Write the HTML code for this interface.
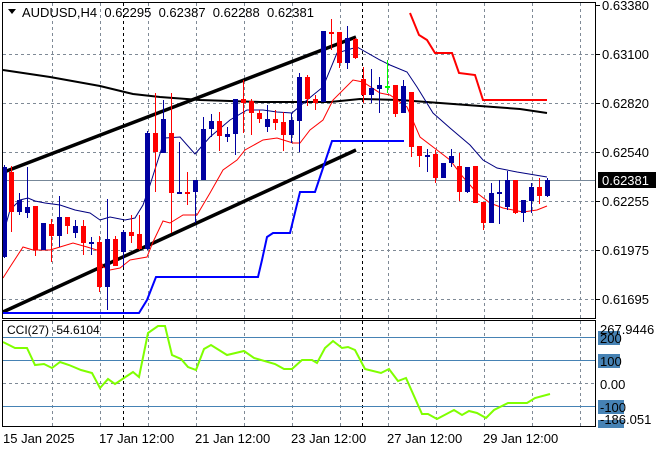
<!DOCTYPE html>
<html><head><meta charset="utf-8">
<style>
html,body{margin:0;padding:0;background:#fff;}
body{width:660px;height:450px;overflow:hidden;position:relative;font-family:"Liberation Sans","DejaVu Sans",sans-serif;}
svg{position:absolute;left:0;top:0;}
svg text{font-family:"Liberation Sans","DejaVu Sans",sans-serif;font-size:12px;}
svg text.sc{font-size:13px;}
</style></head><body>
<svg id="s" width="660" height="450" viewBox="0 0 660 450" xmlns="http://www.w3.org/2000/svg">
<g stroke="#7f8a96" stroke-width="1" stroke-dasharray="3,3" fill="none" id="grid">
<line x1="3" y1="54.5" x2="595" y2="54.5"/><line x1="3" y1="103.5" x2="595" y2="103.5"/>
<line x1="3" y1="152.5" x2="595" y2="152.5"/><line x1="3" y1="201.5" x2="595" y2="201.5"/>
<line x1="3" y1="250.5" x2="595" y2="250.5"/><line x1="3" y1="299.5" x2="595" y2="299.5"/>
<line x1="3" y1="383.5" x2="595" y2="383.5"/>
</g>
<g stroke="#000" stroke-width="1" stroke-dasharray="3,3">
<line x1="123.5" y1="3" x2="123.5" y2="426"/><line x1="362.5" y1="3" x2="362.5" y2="426"/>
</g>
<line x1="3" y1="180.5" x2="595" y2="180.5" stroke="#778899"/>
<g stroke="#4682b4" stroke-width="1">
<line x1="3" y1="337.5" x2="595" y2="337.5"/><line x1="3" y1="360.5" x2="595" y2="360.5"/><line x1="3" y1="406.5" x2="595" y2="406.5"/>
</g>
<polyline fill="none" stroke="#000" stroke-width="2" points="3,70 50,77 100,86 133,94 160,97 200,100 230,101 260,102 330,102 360,99 400,100 440,103 480,106 520,109 547,113"/>
<line x1="4" y1="172" x2="356" y2="37" stroke="#000" stroke-width="3.5"/>
<line x1="3" y1="312" x2="356" y2="150" stroke="#000" stroke-width="3.5"/>
<polyline fill="none" stroke="#f00" stroke-width="2" points="410,13 419,35 427,40 435,53 452,53 459,73 475,75 483,100 547,100"/>
<polyline fill="none" stroke="#0000ff" stroke-width="2" points="3,313 139,313 147,300 156,277 258,277 262,260 267,237 273,233 290,233 300,192 315,192 332,141 404,141"/>
<polyline fill="none" stroke="#000080" stroke-width="1" points="3,235 10,210 20,200 28,198 35,201 45,203 60,205 75,210 90,213 100,220 110,217 125,220 135,218 143,205 150,185 165,138 180,137 195,154 210,137 230,120 247,110 263,110 277,112 292,113 307,100 323,87 337,53 357,47 380,60 390,65 407,72 417,87 433,113 450,128 470,145 483,160 497,168 517,172 547,177"/>
<polyline fill="none" stroke="#f00" stroke-width="1" points="3,278 10,267 23,247 33,250 50,250 60,247 73,243 87,247 97,250 103,267 110,270 120,268 130,260 147,257 153,242 163,221 170,223 183,215 197,215 210,193 223,170 237,160 245,150 263,140 277,138 293,143 300,143 310,130 323,120 333,100 353,80 363,82 380,93 390,95 407,107 420,137 437,150 450,160 463,177 477,193 490,203 503,208 523,212 537,210 547,206"/>
<g id="candles"></g>
<polyline fill="none" stroke="#7fff00" stroke-width="2" points="3,342 15,348 27,348 35,365 44,364 52,368 60,362 69,365 81,370 92,373 100,388 108,379 115,384 133,372 139,377 148,333 158,326 165,326 172,355 181,359 188,367 196,370 204,349 211,345 227,355 244,351 254,358 275,364 284,369 292,369 302,360 312,360 317,363 325,348 333,341 342,348 348,347 355,350 365,369 381,373 389,369 398,381 406,378 422,414 428,414 437,419 454,410 462,415 469,411 477,413 486,418 494,410 508,403 527,403 535,398 550,394"/>
<rect x="2.5" y="2.5" width="593" height="316" fill="none" stroke="#000"/>
<rect x="2.5" y="320.5" width="593" height="106" fill="none" stroke="#000"/>
<g stroke="#000">
<line x1="596" y1="5.5" x2="600" y2="5.5"/><line x1="596" y1="54.5" x2="600" y2="54.5"/><line x1="596" y1="103.5" x2="600" y2="103.5"/><line x1="596" y1="152.5" x2="600" y2="152.5"/><line x1="596" y1="201.5" x2="600" y2="201.5"/><line x1="596" y1="250.5" x2="600" y2="250.5"/><line x1="596" y1="299.5" x2="600" y2="299.5"/>
</g>
<g fill="#000">
<text class="sc" x="602" y="10">0.63380</text><text class="sc" x="602" y="59">0.63100</text><text class="sc" x="602" y="108">0.62820</text><text class="sc" x="602" y="157">0.62540</text><text class="sc" x="602" y="206">0.62255</text><text class="sc" x="602" y="255">0.61975</text><text class="sc" x="602" y="304">0.61695</text>
</g>
<rect x="598" y="172" width="58" height="16" fill="#000"/>
<text class="sc" x="602" y="185" fill="#fff">0.62381</text>
<rect x="598" y="331" width="22" height="14" fill="#4682b4"/>
<rect x="598" y="354" width="22" height="14" fill="#4682b4"/>
<rect x="598" y="400" width="26" height="14" fill="#4682b4"/>
<rect x="598" y="420" width="26" height="8" fill="#4682b4"/>
<g fill="#000">
<text class="sc" x="600" y="334">267.9446</text>
<text class="sc" x="600" y="343">200</text><text class="sc" x="600" y="366">100</text><text class="sc" x="600" y="389">0.00</text><text class="sc" x="600" y="412">-100</text><text class="sc" x="600" y="424">-186.051</text>
<text class="sc" x="3" y="443">15 Jan 2025</text><text class="sc" x="99" y="443">17 Jan 12:00</text><text class="sc" x="195" y="443">21 Jan 12:00</text><text class="sc" x="291" y="443">23 Jan 12:00</text><text class="sc" x="387" y="443">27 Jan 12:00</text><text class="sc" x="483" y="443">29 Jan 12:00</text>
<text x="7" y="334">CCI(27) -54.6104</text>
<text class="sc" x="22" y="17" xml:space="preserve">AUDUSD,H4  0.62295  0.62387  0.62288  0.62381</text>
</g>
<path d="M8,9 L16,9 L12,14 Z" fill="#000"/>
</svg>
<script>
var vg=[52,100,148,196,244,292,340,388,436,484,532,580];
var g=document.getElementById('grid'),ns='http://www.w3.org/2000/svg';
vg.forEach(function(x){var l=document.createElementNS(ns,'line');l.setAttribute('x1',x+.5);l.setAttribute('x2',x+.5);l.setAttribute('y1',3);l.setAttribute('y2',426);g.appendChild(l);});
var C=[[167,257,165,258,'b'],[172,212,166,232,'r'],[200,212,193,215,'b'],[207,213,167,218,'b'],[206,250,206,256,'r'],[223,250,223,250,'b'],[224,236,219,262,'r'],[217,236,196,247,'b'],[217,226,217,234,'r'],[226,233,220,238,'b'],[226,243,220,255,'r'],[242,244,237,255,'b'],[242,287,236,292,'r'],[239,287,199,310,'b'],[239,266,236,266,'r'],[232,252,230,267,'b'],[232,236,215,243,'r'],[234,249,215,250,'r'],[133,249,131,250,'b'],[133,152,93,192,'r'],[119,153,100,153,'b'],[133,193,93,233,'r'],[192,193,142,193,'b'],[192,193,172,205,'r'],[180,192,180,223,'b'],[129,180,117,180,'b'],[121,129,114,137,'b'],[121,136,112,151,'r'],[134,137,127,142,'b'],[99,134,99,155,'b'],[99,103,80,133,'r'],[101,113,99,135,'r'],[113,119,110,123,'r'],[119,127,105,132,'b'],[119,123,110,130,'r'],[122,135,112,151,'r'],[120,135,113,143,'b'],[77,121,73,152,'b'],[77,99,75,106,'r'],[99,103,95,110,'r'],[31,102,31,102,'b'],[32,33,19,50,'r'],[32,63,32,68,'r'],[38,63,26,69,'b'],[39,58,38,59,'r'],[79,95,67,103,'r'],[88,95,69,103,'b'],[85,89,77,113,'b'],[86,87,60,93,'g'],[85,114,85,117,'r'],[86,113,80,113,'b'],[92,147,92,157,'r'],[146,156,146,167,'r'],[155,156,149,172,'b'],[154,178,150,183,'r'],[163,178,163,178,'b'],[156,163,149,167,'b'],[166,192,153,201,'r'],[167,192,167,193,'b'],[166,203,166,203,'r'],[202,223,202,230,'r'],[193,223,183,223,'b'],[192,193,180,224,'b'],[180,207,171,210,'b'],[180,213,180,214,'r'],[200,213,200,222,'b'],[187,201,183,213,'b'],[187,196,178,204,'r'],[180,196,178,197,'b']];
var cg=document.getElementById('candles');
C.forEach(function(c,i){var x=(i==0)?4:11.3+(i-1)*8;var col=c[4]=='b'?'#0000a0':c[4]=='r'?'#f00':'#00ff00';
var w=document.createElementNS(ns,'line');w.setAttribute('x1',Math.round(x)+.5);w.setAttribute('x2',Math.round(x)+.5);w.setAttribute('y1',c[2]);w.setAttribute('y2',c[3]);w.setAttribute('stroke',col);cg.appendChild(w);
var r=document.createElementNS(ns,'rect');r.setAttribute('x',Math.round(x)-2);r.setAttribute('width',5);r.setAttribute('y',c[0]);r.setAttribute('height',Math.max(2,c[1]-c[0]));r.setAttribute('fill',col);cg.appendChild(r);});
</script>
</body></html>
